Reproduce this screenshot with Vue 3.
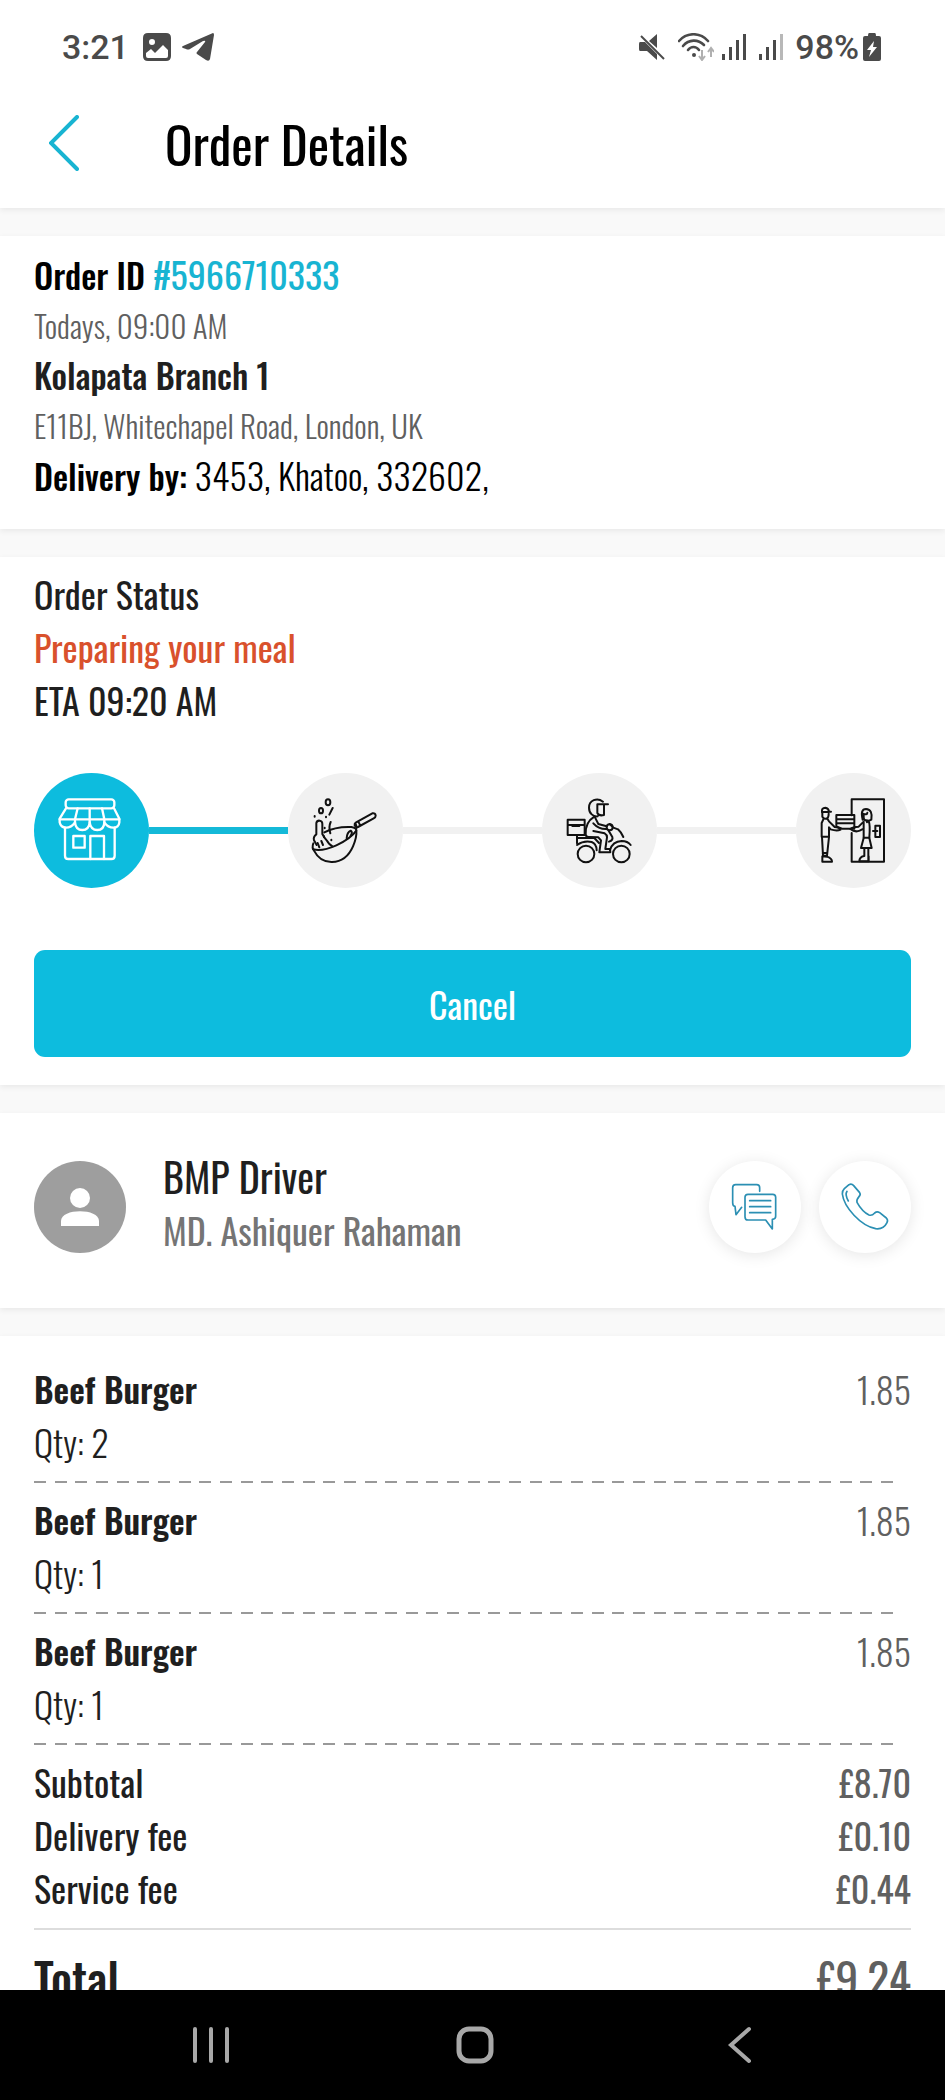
<script setup>
const steps = [
  { id: 'store', label: 'Order placed', active: true },
  { id: 'wok', label: 'Preparing your meal', active: false },
  { id: 'rider', label: 'On the way', active: false },
  { id: 'door', label: 'Delivered', active: false },
]

const items = [
  { name: 'Beef Burger', qty: 2, price: '1.85' },
  { name: 'Beef Burger', qty: 1, price: '1.85' },
  { name: 'Beef Burger', qty: 1, price: '1.85' },
]

const fees = [
  { label: 'Subtotal', amount: '£8.70' },
  { label: 'Delivery fee', amount: '£0.10' },
  { label: 'Service fee', amount: '£0.44' },
]
</script>

<template>
  <div class="screen">
    <div class="top">
      <div class="status-bar">
        <div class="status-left">
          <span>3:21</span>
          <svg class="picture" viewBox="0 0 28 28" width="28" height="28" aria-hidden="true">
            <path fill-rule="evenodd" d="M5 0H23Q28 0 28 5V23Q28 28 23 28H5Q0 28 0 23V5Q0 0 5 0ZM3 20V23Q3 25 5 25H23Q25 25 25 23V17L20 12L12 20L8 16ZM9 6A3 3 0 1 0 9 12A3 3 0 1 0 9 6Z" />
          </svg>
          <svg viewBox="0 0 32 28" width="32" height="28" aria-hidden="true">
            <path d="M31 0Q32 0 32 2L28 26Q27 29 24 27L15 21Q14 20 15 19L23 9Q24 7 21 8L8 16Q6 17 4 16L1 15Q-1 14 1 13Z" />
          </svg>
        </div>
        <div class="status-right">
          <svg class="mute" viewBox="0 0 28 28" width="28" height="28" aria-hidden="true">
            <path d="M19 1V15L11 8ZM2 9H7L19 21V27L9 18H2Q1 18 1 16V11Q1 9 2 9Z" />
            <path d="M3 3L26 26" fill="none" stroke="#4a4a4a" stroke-width="2" />
          </svg>
          <svg class="wifi" viewBox="0 0 36 28" width="36" height="28" aria-hidden="true">
            <g fill="none" stroke="#4a4a4a" stroke-width="2.6" stroke-linecap="round">
              <path d="M1 8C9 -1 22 -1 30 8" />
              <path d="M5 13C11 6 20 6 26 12" />
              <path d="M10 17C13 13 18 13 21 17" />
            </g>
            <circle cx="16" cy="22" r="2" />
            <path d="M24 17V26M21 23L24 27L27 23M33 24V16M30 19L33 15L36 19" fill="none" stroke="#b0b0b0" stroke-width="2" />
          </svg>
          <svg class="signal" viewBox="0 0 25 28" width="25" height="28" aria-hidden="true">
            <path d="M1 21H4V27H1ZM8 14H11V27H8ZM15 7H18V27H15ZM22 1H25V27H22Z" />
          </svg>
          <svg class="signal" viewBox="0 0 25 28" width="25" height="28" aria-hidden="true">
            <path d="M1 21H4V27H1ZM8 14H11V27H8ZM15 7H18V27H15Z" />
            <path d="M22 1H25V27H22Z" fill="#b8b8b8" />
          </svg>
          <span>98%</span>
          <svg class="battery" viewBox="0 0 18 28" width="18" height="28" aria-hidden="true">
            <path fill-rule="evenodd" d="M6 0H12Q13 0 13 3H16Q18 3 18 5V26Q18 28 16 28H2Q0 28 0 26V5Q0 3 2 3H5Q5 0 6 0ZM11 8L4 17H8L6 24L14 14H10Z" />
          </svg>
        </div>
      </div>

      <header class="app-bar">
        <button class="back" type="button" aria-label="Back">
          <svg viewBox="0 0 30 56" width="30" height="56" aria-hidden="true">
            <path d="M28 2L2 28L28 54" fill="none" stroke="#18b4d2" stroke-width="4" stroke-linecap="round" />
          </svg>
        </button>
        <h1>Order Details</h1>
      </header>
    </div>

    <main>
      <section class="card order">
        <p class="black"><span class="medium">Order ID</span> <a href="#">#5966710333</a></p>
        <p class="small">Todays, 09:00 AM</p>
        <p class="medium">Kolapata Branch 1</p>
        <p class="small">E11BJ, Whitechapel Road, London, UK</p>
        <p class="black light"><span class="medium">Delivery by:</span> 3453, Khatoo, 332602,</p>
      </section>

      <section class="card status">
        <p>Order Status</p>
        <p class="preparing">Preparing your meal</p>
        <p>ETA 09:20 AM</p>

        <div class="track">
          <template v-for="(step, index) in steps" :key="step.id">
            <span v-if="index > 0" class="bar" :class="{ active: steps[index - 1].active }"></span>
            <span class="step" :class="{ active: step.active }" role="img" :aria-label="step.label">
              <svg v-if="step.id === 'store'" viewBox="0 0 345 345">
                <g stroke-width="7">
                  <rect x="95" y="79" width="146" height="27" rx="9" />
                  <path d="M96 106L77 137V148Q80 164 96 164T123 148Q125 171 145 171T167 148Q170 171 190 171T211 148Q222 164 238 164T256 148V137L240 106" />
                  <path d="M77 139H256M131 106L123 139V148M167 106V148M204 106L211 139V148" />
                  <path d="M93 164V248Q93 258 103 258H232Q242 258 242 248V164" />
                  <path d="M118 189H152V224H118ZM169 258V189H210V258" />
                </g>
              </svg>
              <svg v-else-if="step.id === 'wok'" viewBox="0 0 345 345">
                <g stroke-width="6">
                  <ellipse cx="120" cy="88" rx="7" ry="9" />
                  <ellipse cx="99" cy="113" rx="6" ry="8" />
                  <path d="M134 105L124 125M128 147Q121 162 127 181" />
                  <path d="M80 129V131M114 131V133M110 164V166M130 200V202M108 190V192" />
                  <path d="M86 216L78 202Q75 191 85 184V150Q87 142 95 143Q103 144 103 152V183Q108 193 116 202Q124 216 132 219" />
                  <path d="M89 210L94 223M100 204L105 216" />
                  <path d="M109 178Q143 160 190 162Q206 165 205 173Q187 198 145 217Q102 236 76 229" />
                  <path d="M76 211Q71 224 78 233Q96 268 132 267Q175 266 195 220Q207 192 205 173" />
                  <path d="M176 196Q177 178 188 173Q195 178 188 188M205 166Q207 162 203 153" />
                  <path d="M203 149L253 121Q262 119 263 128Q263 133 257 136L210 162Q203 164 200 157Q199 151 203 149ZM211 146L217 158" />
                </g>
              </svg>
              <svg v-else-if="step.id === 'rider'" viewBox="0 0 345 345">
                <g stroke-width="6">
                  <path d="M183 86C165 72 141 82 141 104C141 121 154 132 167 130M198 94H166V120Q171 130 186 126V95" />
                  <path d="M77 140H128V186H77ZM77 156H128M91 159H112M105 186V211" />
                  <path d="M157 131C137 143 130 164 131 184Q132 193 141 192L169 193L177 202L172 238H205L204 228H190L195 193Q195 185 188 181L154 174" />
                  <path d="M159 133L169 153L194 160M154 151Q170 169 194 168" />
                  <circle cx="203" cy="163" r="9" />
                  <path d="M203 153L214 164L228 169Q238 178 244 192M200 173L211 192Q214 202 201 206" />
                  <path d="M106 195H157L171 210M105 216Q125 202 149 207Q164 213 164 232M204 231Q212 205 239 204Q257 204 266 216" />
                  <circle cx="132" cy="243" r="25" />
                  <circle cx="238" cy="243" r="25" />
                </g>
              </svg>
              <svg v-else viewBox="0 0 345 345">
                <g stroke-width="6">
                  <path d="M167 127V79H264V266H167V180" />
                  <path d="M238 158H252V192H238ZM231 174H244" />
                  <path d="M78 118Q76 104 88 104Q98 105 99 116H105M78 117H99M79 120V131Q83 138 91 137Q98 135 98 122" />
                  <path d="M83 137L77 150V191H99V163L104 169Q122 175 134 170Q130 163 116 162L99 145L94 137" />
                  <path d="M78 192L81 248H93L99 192M80 240H93M79 250V266H108Q108 256 93 251Z" />
                  <path d="M121 126H175V167H138L121 160ZM121 139H175M121 151H175" />
                  <path d="M200 140Q192 108 210 108Q231 109 226 140Q217 145 210 142M201 122Q214 127 214 119M203 127Q202 145 213 142V148" />
                  <path d="M203 146L188 161Q170 161 163 168Q177 179 191 173L203 167M218 145Q223 154 220 194H203V146" />
                  <path d="M203 195L195 225H227L220 195M205 225V249M217 225V264M204 249Q190 252 190 265H218V250" />
                </g>
              </svg>
            </span>
          </template>
        </div>

        <button class="cancel" type="button">Cancel</button>
      </section>

      <section class="card driver">
        <svg class="avatar" viewBox="0 0 92 92" role="img" aria-label="Driver">
          <circle cx="46" cy="46" r="46" fill="#9e9e9e" />
          <circle cx="46" cy="37" r="10" fill="#fff" />
          <path d="M27 65V60C27 47 65 47 65 60V65Z" fill="#fff" />
        </svg>
        <div class="who">
          <h2>BMP Driver</h2>
          <p>MD. Ashiquer Rahaman</p>
        </div>
        <button class="round" type="button" aria-label="Message driver">
          <svg viewBox="0 0 276 276">
            <path d="M152 91V80Q152 71 143 71H80Q71 71 71 80V125Q71 135 78 136L81 161L98 139" />
            <path d="M117 100H191Q200 100 200 109V166Q200 175 190 175V204L170 177H117Q108 177 108 167V109Q108 100 117 100Z" />
            <path d="M122 119H185M122 137H185M122 155H185" />
          </svg>
        </button>
        <button class="round" type="button" aria-label="Call driver">
          <svg viewBox="0 0 276 276">
            <path d="M90 71Q98 67 104 74L122 95Q126 100 120 107Q112 116 114 124C124 142 136 155 150 162Q159 165 167 156Q174 150 182 155L202 171Q208 177 204 185C197 199 185 205 170 203C125 194 75 139 70 99Q69 90 76 83Z" />
            <path d="M84 91Q77 101 88 120" />
          </svg>
        </button>
      </section>

      <section class="card bill">
        <div v-for="(item, index) in items" :key="index" class="item">
          <div class="row">
            <strong>{{ item.name }}</strong>
            <span class="price light">{{ item.price }}</span>
          </div>
          <p class="light">Qty: {{ item.qty }}</p>
          <div class="dashes"><i v-for="n in 42" :key="n"></i></div>
        </div>
        <div v-for="fee in fees" :key="fee.label" class="row">
          <span>{{ fee.label }}</span>
          <span class="amount">{{ fee.amount }}</span>
        </div>
        <div class="row total">
          <span class="total-label">Total</span>
          <span class="amount">£9.24</span>
        </div>
      </section>
    </main>

    <nav class="system-nav">
      <button type="button" aria-label="Recent apps">
        <svg viewBox="0 0 38 38"><path d="M3 3V35M19 3V35M35 3V35" /></svg>
      </button>
      <button type="button" aria-label="Home">
        <svg viewBox="0 0 38 38"><rect x="3" y="3" width="32" height="32" rx="10" stroke-width="5" /></svg>
      </button>
      <button type="button" aria-label="Back">
        <svg viewBox="0 0 38 38"><path d="M28 3L10 19L28 35" /></svg>
      </button>
    </nav>
  </div>
</template>

<style>
body {
  margin: 0;
  background: #f9f9f9;
}
</style>

<style scoped>
.screen {
  display: flex;
  flex-direction: column;
  height: 100vh;
  background: #f9f9f9;
  color: #1f1f1f;
  font-family: Oswald, "Roboto Condensed", "Liberation Sans Narrow", "Arial Narrow", "Liberation Sans", sans-serif;
  font-size: 36px;
  line-height: 53px;
}
h1, h2, p {
  margin: 0;
  font-weight: 400;
}
button {
  padding: 0;
  border: 0;
  background: none;
  font: inherit;
  color: inherit;
}
svg {
  display: block;
}
.light {
  font-weight: 300;
}
.medium {
  font-size: 34px;
  font-weight: 500;
}
strong {
  font-size: 34px;
  font-weight: 600;
}
.top {
  background: #fff;
  box-shadow: 0 2px 6px rgba(0, 0, 0, 0.07);
  z-index: 1;
}
.status-bar {
  display: flex;
  justify-content: space-between;
  align-items: center;
  height: 94px;
  padding: 0 64px 0 62px;
  color: #4a4a4a;
  fill: #4a4a4a;
  font-family: Roboto, sans-serif;
  font-size: 34px;
  font-weight: 500;
}
.status-left,
.status-right {
  display: flex;
  align-items: center;
}
.status-left {
  gap: 11px;
}
.picture {
  margin-left: 3px;
}
.status-right {
  gap: 12px;
}
.battery {
  margin-left: -8px;
}
.wifi {
  margin-right: -5px;
}
.app-bar {
  display: flex;
  align-items: center;
  height: 98px;
  padding: 0 34px 16px 49px;
}
.back {
  margin-right: 86px;
}
h1 {
  font-size: 51px;
  line-height: 60px;
  color: #000;
}
main {
  flex: 1;
  min-height: 0;
  display: flex;
  flex-direction: column;
  gap: 28px;
  padding-top: 28px;
  overflow-y: auto;
  scrollbar-width: none;
}
.card {
  flex-shrink: 0;
  padding: 0 34px;
  background: #fff;
  box-shadow: 0 2px 6px rgba(0, 0, 0, 0.07);
}
.order {
  padding-top: 13px;
  padding-bottom: 28px;
  line-height: 50px;
}
.black {
  color: #000;
}
.small {
  font-size: 31px;
  font-weight: 300;
  color: #606060;
}
a {
  color: #18b4d2;
  text-decoration: none;
}
.status {
  padding-top: 10px;
  padding-bottom: 28px;
}
.preparing {
  color: #d9512c;
}
.track {
  display: flex;
  align-items: center;
  margin: 47px 0 62px;
}
.step {
  width: 115px;
  height: 115px;
  border-radius: 50%;
  background: #f1f1f1;
}
.step.active {
  background: #0dbcde;
}
.step svg {
  fill: none;
  stroke: #111;
  stroke-linecap: round;
  stroke-linejoin: round;
}
.step.active svg {
  stroke: #fff;
}
.bar {
  flex: 1;
  height: 7px;
  background: #f1f1f1;
}
.bar.active {
  background: #14b9d8;
}
.cancel {
  display: block;
  width: 100%;
  height: 107px;
  border-radius: 11px;
  background: #0dbcde;
  color: #fff;
}
.driver {
  display: flex;
  align-items: center;
  gap: 18px;
  padding-top: 48px;
  padding-bottom: 55px;
}
.avatar {
  width: 92px;
  height: 92px;
}
.who {
  flex: 1;
  margin: -16px 0 -8px 19px;
}
h2 {
  font-size: 40px;
  line-height: 54px;
}
.who p {
  line-height: 54px;
  color: #757575;
}
.round {
  width: 92px;
  height: 92px;
  border-radius: 50%;
  background: #fff;
  box-shadow: 0 2px 16px rgba(0, 0, 0, 0.1);
}
.round svg {
  fill: none;
  stroke: #2b8fb3;
  stroke-width: 5;
  stroke-linecap: round;
  stroke-linejoin: round;
}
.bill {
  padding-top: 26px;
  padding-bottom: 40px;
}
.row {
  display: flex;
  justify-content: space-between;
}
.price,
.amount {
  color: #606060;
}
.dashes {
  display: flex;
  justify-content: space-between;
  margin: 13px 0 10px;
  padding-right: 18px;
}
.dashes i {
  width: 12px;
  height: 2px;
  background: #999;
}
.total {
  margin-top: 14px;
  padding-top: 17px;
  border-top: 2px solid #ddd;
  font-size: 46px;
  line-height: 60px;
}
.total-label {
  font-weight: 500;
}
.system-nav {
  display: flex;
  height: 110px;
  padding: 0 73px 0 79px;
  background: #000;
  z-index: 1;
}
.system-nav button {
  flex: 1;
  display: flex;
  align-items: center;
  justify-content: center;
}
.system-nav svg {
  width: 38px;
  height: 38px;
  fill: none;
  stroke: #a8a8a8;
  stroke-width: 4;
  stroke-linecap: round;
}
</style>
